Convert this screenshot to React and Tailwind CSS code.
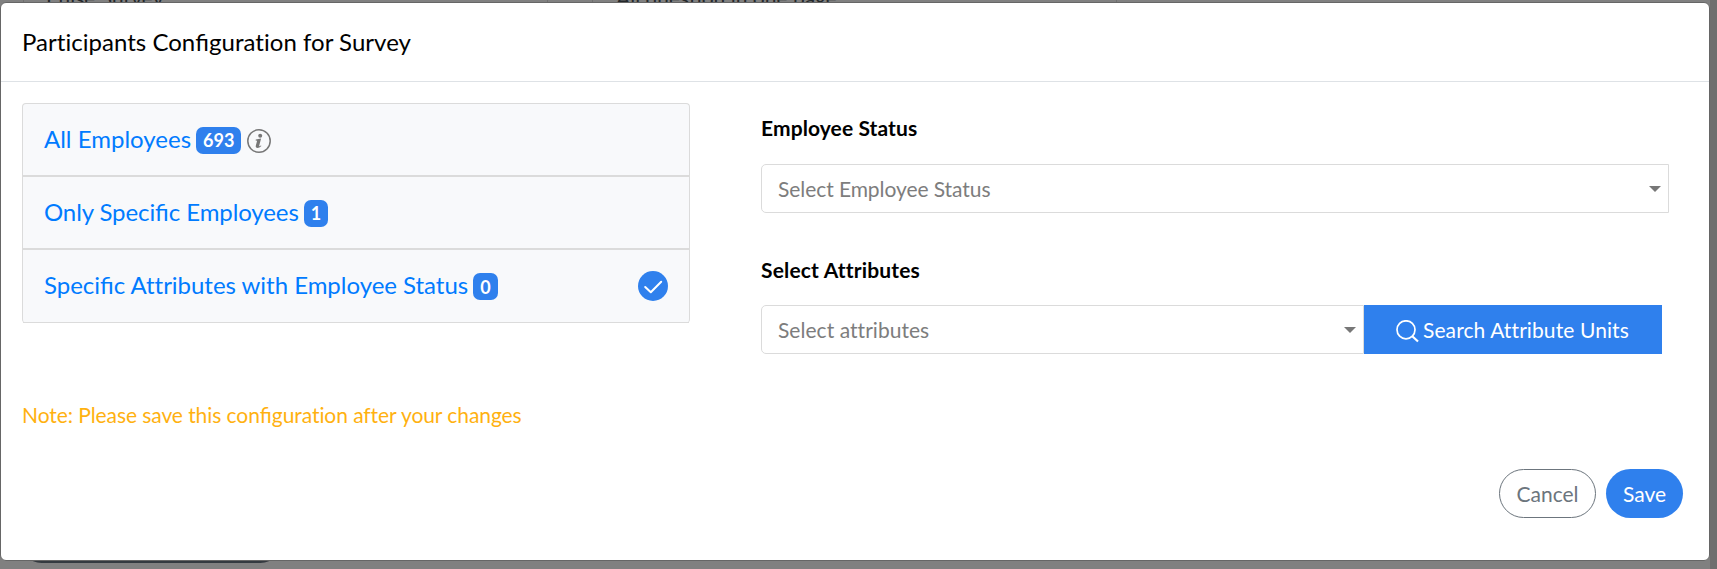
const options = [
  { label: "All Employees", count: 693, info: true, tracking: "tracking-normal" },
  { label: "Only Specific Employees", count: 1, tracking: "tracking-[-0.1px]" },
  { label: "Specific Attributes with Employee Status", count: 0, checked: true, tracking: "tracking-[-0.025px]" },
];

// Lato joins "ti" and "tt" too; only the "fi" pair is set as a ligature here.
function Txt({ children }) {
  return children.split(/(fi)/).map((part, i) =>
    part === "fi" ? (
      <span key={i} className="tracking-normal [font-variant-ligatures:common-ligatures]">fi</span>
    ) : (
      part
    )
  );
}

function Caret() {
  return (
    <svg className="h-[6px] w-[12px] shrink-0" viewBox="0 0 12 6" fill="#777">
      <path d="M0 0h12L6 6z" />
    </svg>
  );
}

function InfoIcon() {
  return (
    <svg className="mt-[5px] ml-[6px] size-[24px]" viewBox="0 0 24 24" fill="none">
      <circle cx="12" cy="12" r="11.200" stroke="#777" strokeWidth="1.500" />
      <circle cx="13.200" cy="6.800" r="2" fill="#777" />
      <path d="M8.800 10.400l5.300-.8-2 7.300c-.1.500.3.600 1.900-.4l.4.600c-1.400 1.300-2.600 1.900-3.900 1.900-1.400 0-2-.9-1.700-2.200l1.300-5-1.500-.4z" fill="#777" />
    </svg>
  );
}

function Select({ label, className }) {
  return (
    <div className={"flex h-[49px] items-center justify-between border border-[#dbdbdb] bg-white pr-[7px] pl-4 text-[21px] text-[#7d7d7d] " + className}>
      <span className="leading-none">{label}</span>
      <Caret />
    </div>
  );
}

function Option({ label, count, info, checked, tracking }) {
  return (
    <div className="flex h-[73px] items-center justify-between border-b-2 border-[#dbdbdb] px-[21px] last:border-b">
      <div className="flex items-center pb-[2px] whitespace-nowrap text-[24px] text-[#007bff]">
        <span className={"leading-none " + tracking}><Txt>{label}</Txt></span>
        <span className="mt-[3px] ml-[5px] flex h-[27px] items-center rounded-[7px] bg-[#2f80ed] px-[7px] text-[18px] leading-none font-bold text-white">{count}</span>
        {info && <InfoIcon />}
      </div>
      {checked && (
        <svg className="size-[30px]" viewBox="0 0 30 30" fill="none">
          <circle cx="15" cy="15" r="15" fill="#2f80ed" />
          <path d="M7.200 16l5.600 5.300L23.200 10.800" stroke="#fff" strokeWidth="2" strokeLinecap="round" strokeLinejoin="round" />
        </svg>
      )}
    </div>
  );
}

export default function App() {
  return (
    <div className="relative h-[569px] w-[1717px] overflow-hidden bg-[#808080] font-['Lato',sans-serif] text-black [font-variant-ligatures:none]">
      <div className="absolute top-0 left-[23px] h-[10px] w-[525px] border-x border-[#6f6f6f]" />
      <div className="absolute top-0 left-[592px] h-[10px] w-[525px] border-x border-[#6f6f6f]" />
      <span className="absolute -top-[13px] left-[46px] text-[21px] leading-none text-[#24282b]">Pulse Survey</span>
      <span className="absolute -top-[13px] left-[616px] text-[21px] leading-none text-[#24282b]">All question in one page</span>
      <div className="absolute top-[520px] left-[20px] h-[43px] w-[262px] rounded-[22px] bg-[#343a40]" />
      <div className="absolute top-0 right-0 h-[569px] w-[7px] bg-[#6e6e6e]" />

      <div className="absolute top-[2px] left-0 flex h-[559px] w-[1710px] flex-col rounded-[6px] border border-[#666] bg-white">
        <header className="flex h-[79px] shrink-0 items-center border-b border-[#dee2e6] pl-[21px]">
          <h1 className="text-[24px] leading-none tracking-[0.03px]"><Txt>Participants Configuration for Survey</Txt></h1>
        </header>
        <div className="flex h-[300px] pt-[21px] pl-[21px]">
          <div className="h-[220px] w-[668px] rounded-[4px] border border-b-0 border-[#dbdbdb] bg-[#f8f9fb]">
            {options.map((o) => (
              <Option key={o.label} {...o} />
            ))}
          </div>
          <div className="ml-[71px] w-[908px] pt-[13px]">
            <h2 className="text-[21px] leading-[24px] font-bold tracking-[0.1px]">Employee Status</h2>
            <Select label="Select Employee Status" className="mt-[24px] rounded-l-[5px] tracking-[-0.07px]" />
            <h2 className="mt-[45px] text-[21px] leading-[24px] font-bold tracking-[0.17px]">Select Attributes</h2>
            <div className="mt-[23px] flex">
              <Select label="Select attributes" className="w-[603px] rounded-l-[5px] tracking-[0.04px]" />
              <button className="flex h-[49px] w-[298px] items-center bg-[#2f80ed] pl-[32px] text-[21px] leading-none tracking-[0.1px] text-white">
                <svg className="mt-[3px] mr-[4px] size-[23px]" viewBox="0 0 23 23" fill="none" stroke="#fff" strokeWidth="1.700">
                  <circle cx="10" cy="9.800" r="9" />
                  <path d="M16.300 16.300L22 21.500" strokeWidth="2.200" />
                </svg>
                Search Attribute Units
              </button>
            </div>
          </div>
        </div>
        <p className="mt-[20px] pl-[21px] text-[21px] leading-[26px] tracking-[-0.075px] text-[#ffb110]"><Txt>Note: Please save this configuration after your changes</Txt></p>
        <footer className="mt-[41px] flex justify-end gap-[10px] pr-[26px] text-[21px] leading-none">
          <button className="h-[49px] w-[97px] rounded-full border border-[#6c757d] text-[#6c757d]">Cancel</button>
          <button className="h-[49px] w-[77px] rounded-full bg-[#2f80ed] text-white">Save</button>
        </footer>
      </div>
    </div>
  );
}
